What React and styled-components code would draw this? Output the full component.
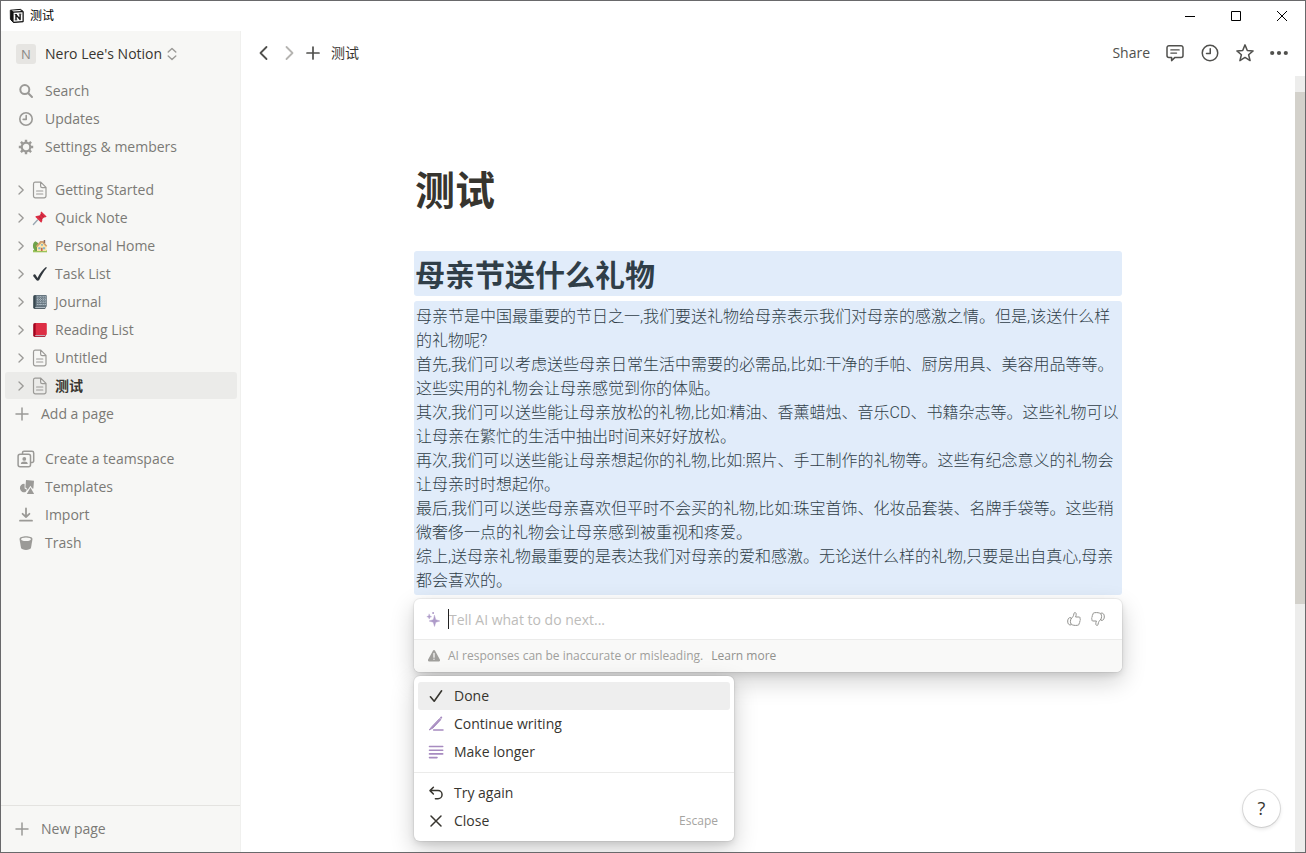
import React from 'react';
import styled, { createGlobalStyle } from 'styled-components';

const GlobalStyle = createGlobalStyle`
    * {
        box-sizing: border-box;
    }
    html, body, #root {
        height: 100%;
        margin: 0;
    }
    body {
        font-family: 'Open Sans', 'Noto Sans CJK SC', sans-serif;
        font-size: 14px;
        line-height: 18px;
        color: #37352f;
        background: #fff;
    }
    button, input {
        font-family: inherit;
        font-size: inherit;
        line-height: inherit;
        color: inherit;
        margin: 0;
        padding: 0;
        border: 0;
        background: none;
        outline: none;
    }
    a {
        color: inherit;
        text-decoration: none;
    }
    svg {
        display: block;
        flex-shrink: 0;
    }
`;

const Window = styled.div`
    display: flex;
    flex-direction: column;
    height: 100vh;
    border: 1px solid #69696b;
    overflow: hidden;
`;

const TitleBar = styled.header`
    display: flex;
    flex-shrink: 0;
    align-items: center;
    height: 30px;
    padding-left: 8px;
    font-size: 12px;
    color: #000;
`;

const WindowTitle = styled.span`
    flex: 1;
    padding-left: 5px;
`;

const WindowButton = styled.button`
    display: flex;
    align-items: center;
    justify-content: center;
    width: 46px;
    height: 28px;
`;

const Body = styled.div`
    display: flex;
    flex: 1;
    min-height: 0;
`;

const Sidebar = styled.nav`
    display: flex;
    flex-direction: column;
    flex-shrink: 0;
    width: 240px;
    background: #f7f7f5;
    border-right: 1px solid #f0f0ee;
    font-weight: 500;
    color: #7b7a76;
`;

const Workspace = styled.button`
    display: flex;
    align-items: center;
    height: 46px;
    padding-left: 15px;
    font-weight: 500;
    color: #37352f;
`;

const Avatar = styled.span`
    width: 20px;
    margin-right: 9px;
    border-radius: 3px;
    background: #e6e5e2;
    font-size: 13px;
    line-height: 20px;
    text-align: center;
    color: #8b8a86;
`;

const WorkspaceName = styled.span`
    margin-right: 5px;
`;

const Section = styled.div`
    display: flex;
    flex-direction: column;
    margin-bottom: ${props => props.$gap || 0}px;
`;

const Item = styled.a`
    display: flex;
    align-items: center;
    height: ${props => props.$active ? 27 : 28}px;
    margin: 0 3px ${props => props.$active ? 1 : 0}px 4px;
    padding-left: 10px;
    border-radius: 3px;
    background: ${props => props.$active ? '#ebebe9' : 'transparent'};
    color: ${props => props.$active ? '#37352f' : 'inherit'};
    font-weight: ${props => props.$active ? 600 : 500};
`;

const IconSlot = styled.span`
    display: flex;
    align-items: center;
    justify-content: center;
    width: ${props => props.$width || 22}px;
    margin-right: ${props => props.$gap}px;
    color: #9b9a97;
`;

const NewPage = styled.button`
    display: flex;
    align-items: center;
    height: 47px;
    margin-top: auto;
    padding-left: 14px;
    border-top: 1px solid #e4e3e0;
    font-weight: 500;
`;

const Main = styled.main`
    position: relative;
    display: flex;
    flex: 1;
    flex-direction: column;
    min-width: 0;
`;

const TopBar = styled.div`
    display: flex;
    flex-shrink: 0;
    align-items: center;
    justify-content: space-between;
    height: 45px;
    padding: 0 17px 2px 15px;
`;

const BarGroup = styled.div`
    display: flex;
    align-items: center;
    gap: ${props => props.$gap}px;
    color: #50504d;
`;

const BarButton = styled.button`
    display: flex;
    align-items: center;
    justify-content: center;
    height: 24px;
    color: ${props => props.$faded ? '#b5b4b1' : '#50504d'};
`;

const Crumb = styled.a`
    margin-left: 2px;
    color: #37352f;
`;

const Scroller = styled.div`
    display: flex;
    flex: 1;
    min-height: 0;
`;

const Page = styled.article`
    flex: 1;
    min-width: 0;
    padding: 84px 96px 0;
    overflow: hidden;
`;

const Column = styled.div`
    max-width: 708px;
    margin: 0 auto;
`;

const Title = styled.h1`
    margin: 0 0 31px;
    padding: 0 1px;
    font-size: 40px;
    font-weight: 700;
    line-height: 60px;
`;

const Heading = styled.h2`
    margin: 0 0 5px;
    padding: 4px 1px 2px;
    border-radius: 3px;
    background: #e1ecfa;
    font-size: 30px;
    font-weight: 700;
    line-height: 39px;
    color: #303e48;
`;

const TextBlock = styled.div`
    margin-bottom: 4px;
    padding: 4px 0 2px 2px;
    border-radius: 3px;
    background: #e1ecfa;
    font-family: Roboto, 'Noto Sans CJK SC', sans-serif;
    font-size: 16px;
    font-weight: 300;
    line-height: 24px;
    color: #303e48;
    text-spacing-trim: space-all;
    p {
        margin: 0;
    }
`;

const floating = `
    border-radius: 6px;
    background: #fff;
    box-shadow: 0 0 0 1px rgba(15, 15, 15, 0.05), 0 3px 6px rgba(15, 15, 15, 0.1), 0 9px 24px rgba(15, 15, 15, 0.2);
`;

const AiPanel = styled.form`
    ${floating}
    margin-bottom: 4px;
    overflow: hidden;
`;

const Prompt = styled.label`
    display: flex;
    align-items: center;
    height: 40px;
    padding: 0 16px 0 12px;
`;

const PromptInput = styled.input`
    flex: 1;
    min-width: 0;
    height: 20px;
    margin-left: 8px;
    border-left: 1px solid #222;
    &::placeholder {
        color: #bdbcba;
        opacity: 1;
    }
`;

const VoteButton = styled.button`
    margin-left: 8px;
    color: #91918e;
`;

const Notice = styled.div`
    display: flex;
    align-items: center;
    height: 33px;
    padding: 0 13px;
    border-top: 1px solid #ebebea;
    background: #f9f9f8;
    font-size: 12px;
    color: #a09f9c;
    span {
        margin: 0 8px 0 7px;
    }
    a {
        font-weight: 500;
        color: #91918e;
    }
`;

const Menu = styled.div`
    ${floating}
    position: relative;
    width: 320px;
`;

const MenuGroup = styled.div`
    padding: 6px 4px;
    & + & {
        border-top: 1px solid #ebebea;
    }
`;

const MenuItem = styled.button`
    display: flex;
    align-items: center;
    width: 100%;
    height: 28px;
    padding: 0 12px 0 10px;
    border-radius: 3px;
    background: ${props => props.$active ? '#eeeeee' : 'transparent'};
    span {
        flex: 1;
        margin-left: 10px;
        text-align: left;
    }
    kbd {
        font-family: inherit;
        font-size: 12px;
        color: #a5a4a1;
    }
`;

const ScrollTrack = styled.div`
    flex-shrink: 0;
    width: 10px;
    padding-top: 16px;
    background: #ededec;
`;

const ScrollThumb = styled.div`
    height: 67.4%;
    background: #d3d1cb;
`;

const HelpButton = styled.button`
    position: absolute;
    right: 25px;
    bottom: 25px;
    width: 37px;
    height: 37px;
    border-radius: 50%;
    background: #fff;
    box-shadow: 0 0 0 1px rgba(15, 15, 15, 0.12), 0 2px 4px rgba(15, 15, 15, 0.12);
    font-size: 18px;
    line-height: 37px;
`;

const Icon = ({ size = 16, box = 16, stroke = 1.4, children }) => (
    <svg width={size} height={size} viewBox={`0 0 ${box} ${box}`} fill="none" stroke="currentColor" strokeWidth={stroke} strokeLinecap="round" strokeLinejoin="round" aria-hidden="true">
        {children}
    </svg>
);

const LogoIcon = () => (
    <Icon stroke={1}>
        <path d="M1.7 2.2 L11.5 1.4 L14.2 3.4 V13.8 L4.4 14.5 L1.7 11.6 Z" fill="#111" stroke="#111" />
        <path d="M4.6 4.8 L13.5 4.2 V13.1 L4.6 13.7 Z" fill="#fff" stroke="none" />
        <path d="M2.8 2.6 L11 2 L12.4 3 L4.5 3.6 Z" fill="#fff" stroke="none" />
        <path d="M7 11.8 V6.6 L11.1 11.5 V6.2" stroke="#111" strokeWidth="1.4" strokeLinecap="butt" />
        <path d="M6.1 6.5 H7.6 M6.1 11.9 H7.9 M10.2 6.1 H12" stroke="#111" strokeWidth="0.8" />
    </Icon>
);

const SearchIcon = () => (
    <Icon stroke={2}>
        <circle cx="6.8" cy="6.6" r="4.5" />
        <path d="M10.3 10.2 L14 14" />
    </Icon>
);

const ClockIcon = ({ size, stroke = 1.6 }) => (
    <Icon size={size} stroke={stroke}>
        <circle cx="8" cy="8" r="6.2" />
        <path d="M8.2 4.6 V8.4 H5.2" />
    </Icon>
);

const GearIcon = () => (
    <Icon stroke={2.2}>
        <circle cx="8" cy="8" r="4.3" />
        <path strokeLinecap="butt" strokeWidth="2.4" d="M8 4 V0.8 M8 12 V15.2 M4 8 H0.8 M12 8 H15.2 M5.2 5.2 L2.9 2.9 M10.8 10.8 L13.1 13.1 M5.2 10.8 L2.9 13.1 M10.8 5.2 L13.1 2.9" />
    </Icon>
);

const UpDownIcon = () => (
    <svg width="10" height="14" viewBox="0 0 10 14" fill="none" stroke="#9b9a97" strokeWidth="1.4" strokeLinecap="round" strokeLinejoin="round">
        <path d="M1.2 5 L5 1.4 L8.8 5 M1.2 9 L5 12.6 L8.8 9" />
    </svg>
);

const ChevronIcon = () => (
    <Icon size={10} box={10} stroke={1.3}>
        <path d="M3 1 L7.2 5 L3 9" />
    </Icon>
);

const PlusIcon = ({ stroke = 1.5 }) => (
    <Icon size={14} box={14} stroke={stroke}>
        <path d="M7 1 V13 M1 7 H13" />
    </Icon>
);

const PageIcon = () => (
    <Icon size={18} box={18} stroke={1.2}>
        <path d="M4 1.2 H9.8 L15 6.4 V15 A1.8 1.8 0 0 1 13.2 16.8 H4.3 A1.8 1.8 0 0 1 2.5 15 V2.9 A1.7 1.7 0 0 1 4 1.2 Z M9.6 1.4 V5 A1.6 1.6 0 0 0 11.2 6.6 H14.8 M5.6 10 H11.8 M5.6 13 H11.8" />
    </Icon>
);

const PinIcon = () => (
    <Icon>
        <path d="M5.5 10 L1.4 14.4" stroke="#9aa8b2" strokeWidth="1.4" />
        <path d="M9.4 1.4 L14.6 6.5 C13.8 7.5 12.8 7.4 12.2 7.2 L10.2 9.3 C10.5 10.8 10 12 9.2 12.8 L3.2 6.8 C4 6 5.4 5.5 6.8 5.9 L8.8 3.9 C8.5 3 8.5 2.1 9.4 1.4 Z" fill="#dd2e44" stroke="none" />
        <path d="M8.9 4.2 L11.8 7.2 M6.6 6.2 L9.9 9.4" stroke="#a61d32" strokeWidth="0.8" />
    </Icon>
);

const HouseIcon = () => (
    <Icon stroke={0}>
        <path d="M1 12 H15 V14.3 H1 Z" fill="#9ac35a" />
        <path d="M3.5 3.2 C1.3 4 0.4 7 1.2 10 L3 13 H6 V5 Z" fill="#6fa24a" />
        <path d="M5 8 L10 3.6 L14.5 8 V13 H5 Z" fill="#ffe5a8" />
        <path d="M3.8 8.2 L8.2 3 H11.4 L15.3 8 L14 8.8 L10 4.6 L5 9.2 Z" fill="#d0a070" />
        <path d="M11.7 2 H13.2 V5 H11.7 Z" fill="#8b6b61" />
        <path d="M6.3 9.3 H8.5 V11.2 H6.3 Z M10.9 9.3 H13.1 V11.2 H10.9 Z" fill="#7fb5d3" />
        <path d="M8.9 9.8 H10.6 V13 H8.9 Z" fill="#bf6952" />
        <path d="M9.2 6 H10.8 V7.7 H9.2 Z" fill="#7bb1c9" />
    </Icon>
);

const TaskIcon = () => (
    <Icon>
        <path d="M1.2 9.2 C2.1 7.9 3.2 8 4 9.4 L5.5 12 C7.7 7.6 10.3 4.1 13.6 1.3 C14.6 0.8 15.2 1.5 14.5 2.3 C11.7 5.6 9.3 9.5 7.2 14 C6.5 15 4.9 15 4.3 14 L1.3 10.3 Z" fill="#31373d" stroke="none" />
    </Icon>
);

// one cover shape for both book icons
const BookIcon = ({ cover, spine, dotted }) => (
    <Icon stroke={0}>
        <path d="M3 1 H14 V13 L13 15 H3 Q1.2 15 1.2 13.3 V2.7 Q1.2 1 3 1 Z" fill={spine} />
        <path d="M3.2 13.2 H13.3 V14.2 H3.2 Z" fill="#ccd6dd" />
        <path d="M3.6 1 H13.8 Q14.8 1 14.8 2 V12 Q14.8 13 13.8 13 H3.6 Z" fill={cover} />
        {dotted && (
            <path d="M6 2 V12 M8.5 2 V12 M11 2 V12 M13 2 V12 M4.8 3 H14 M4.8 5.5 H14 M4.8 8 H14 M4.8 10.5 H14" stroke="#b4c1ca" strokeWidth="0.8" strokeDasharray="1.2 0.8" strokeLinecap="butt" />
        )}
    </Icon>
);

const TeamIcon = () => (
    <Icon size={18} box={18} stroke={1.5}>
        <path d="M5.5 4 V2.8 A1.5 1.5 0 0 1 7 1.3 H15 A1.7 1.7 0 0 1 16.7 3 V10.8 A1.6 1.6 0 0 1 15 12.5 H14" />
        <rect x="1.1" y="4.3" width="12.4" height="12.4" rx="2" />
        <circle cx="7.3" cy="8.9" r="1.9" fill="currentColor" stroke="none" />
        <path d="M3.8 14 C4 12.4 5.3 11.6 7.3 11.6 C9.3 11.6 10.6 12.4 10.8 14 Z" fill="currentColor" stroke="none" />
    </Icon>
);

const TemplatesIcon = () => (
    <Icon stroke={0}>
        <path d="M8 1 L16 1.7 L15.4 9.6 L14.2 9.5 L12.5 6.8 L9.6 11 L8.4 9 L7.4 8.6 Z" fill="currentColor" />
        <path d="M6.6 4.9 A4.2 4.2 0 1 0 7.6 13 L9 10.8 L6.6 9.4 Z" fill="currentColor" />
        <path d="M12.5 8.6 L16.2 15 H8.8 Z" fill="currentColor" />
    </Icon>
);

const ImportIcon = () => (
    <Icon stroke={1.8}>
        <path d="M8 1.5 V10 M4.6 6.8 L8 10 L11.4 6.8 M2 13.7 H14" />
    </Icon>
);

const TrashIcon = () => (
    <Icon stroke={0}>
        <path d="M1.5 4 C1.5 0.3 14.5 0.3 14.5 4 L13 12.8 C12.5 15.6 3.5 15.6 3 12.8 Z" fill="currentColor" />
        <ellipse cx="8" cy="4.3" rx="4.9" ry="1.8" fill="#f7f7f5" />
    </Icon>
);

const CommentIcon = () => (
    <Icon size={20} box={20} stroke={1.5}>
        <path d="M4 2.7 H16 A2 2 0 0 1 18 4.7 V12.4 A2 2 0 0 1 16 14.4 H10 L6.6 17.6 V14.4 H4 A2 2 0 0 1 2 12.4 V4.7 A2 2 0 0 1 4 2.7 Z" />
        <path d="M5.8 6.9 H14.2 M5.8 10.1 H11.6" strokeWidth="1.2" />
    </Icon>
);

const StarIcon = () => (
    <Icon size={20} box={20} stroke={1.5}>
        <path d="M10 1.9 L12.3 7.5 L18.1 7.9 L13.6 11.7 L15.1 17.6 L10 14.4 L4.9 17.6 L6.4 11.7 L1.9 7.9 L7.7 7.5 Z" />
    </Icon>
);

const MoreIcon = () => (
    <svg width="18" height="6" viewBox="0 0 18 6" fill="currentColor">
        <circle cx="2.2" cy="3" r="2.1" />
        <circle cx="9" cy="3" r="2.1" />
        <circle cx="15.8" cy="3" r="2.1" />
    </svg>
);

const SparkleIcon = () => (
    <Icon stroke={0}>
        <path d="M9.5 4.6 L10.7 8.7 L14.8 10 L10.7 11.2 L9.5 15.4 L8.3 11.2 L4.2 10 L8.3 8.7 Z" fill="#ae9bc9" stroke="#ae9bc9" strokeWidth="0.5" />
        <path d="M4.2 3.2 L4.9 5 L6.6 5.7 L4.9 6.3 L4.2 8.1 L3.5 6.3 L1.8 5.7 L3.5 5 Z" fill="#ae9bc9" stroke="#ae9bc9" strokeWidth="0.4" />
        <circle cx="8.1" cy="2" r="1" fill="#ae9bc9" />
    </Icon>
);

const ThumbIcon = ({ down }) => (
    <Icon stroke={1}>
        <g transform={down ? 'rotate(180 8 8)' : undefined}>
            <path d="M5.2 7.6 C6.7 6.5 7.5 4.9 7.9 3 C8.1 1.7 8.7 1.3 9.4 1.6 C10.4 2 10.4 4 9.6 6 H13 C14.2 6 14.5 7.2 13.9 7.9 C14.6 8.5 14.4 9.6 13.7 10 C14.1 10.8 13.8 11.7 13.2 12 C13.4 13.5 12.6 14.2 11.3 14.3 C8.9 14.6 6.6 14.3 5.2 13.2 C4.1 11.5 4.1 9.4 5.2 7.6 Z" />
            <path d="M4.6 6.7 H3.6 C1.3 7.2 1 12.6 3.2 13.7 L4.8 13.9" />
        </g>
    </Icon>
);

const WarningIcon = () => (
    <Icon size={14} box={14} stroke={0}>
        <path d="M7 1 Q7.7 1 8.1 1.8 L13 10.7 Q13.4 12.2 12 12.4 H2 Q0.6 12.2 1 10.7 L5.9 1.8 Q6.3 1 7 1 Z" fill="#a09f9c" />
        <path d="M7 4.5 V8.2 M7 10.2 V10.3" stroke="#f9f9f8" strokeWidth="1.3" />
    </Icon>
);

const DoneIcon = () => (
    <Icon stroke={1.6}><path d="M2.4 8.8 L6.2 13.2 L13.6 2.8" /></Icon>
);

const WriteIcon = () => (
    <Icon stroke={1.5}>
        <path d="M5.6 13.9 H15" stroke="#a78bc0" />
        <path d="M11.8 2.8 L12.8 3.7 L5 12 L1.2 14 L3.6 10.9 Z" fill="#a78bc0" stroke="#a78bc0" strokeWidth="0.9" />
        <path d="M12.9 1.9 L13.3 1.5" stroke="#a78bc0" strokeWidth="1.8" />
    </Icon>
);

const LongerIcon = () => (
    <Icon stroke={1.6}><path d="M1.5 2.5 H14.7 M1.5 6.2 H14.7 M1.5 9.9 H14.7 M1.5 13.6 H9" stroke="#a78bc0" /></Icon>
);

const UndoIcon = () => (
    <Icon stroke={1.5}><path d="M5.4 2.2 L2 5.6 L5.4 9 M2.2 5.6 H10 A4 4 0 0 1 10 13.7 H7.4" /></Icon>
);

const CloseIcon = () => (
    <Icon stroke={1.5}><path d="M3 3 L13 13 M13 3 L3 13" /></Icon>
);

const topLinks = [
    { name: 'Search', icon: <SearchIcon /> },
    { name: 'Updates', icon: <ClockIcon size={16} /> },
    { name: 'Settings & members', icon: <GearIcon /> }
];

const pages = [
    { name: 'Getting Started', icon: <PageIcon /> },
    { name: 'Quick Note', icon: <PinIcon /> },
    { name: 'Personal Home', icon: <HouseIcon /> },
    { name: 'Task List', icon: <TaskIcon /> },
    { name: 'Journal', icon: <BookIcon cover="#66757f" spine="#37474f" dotted /> },
    { name: 'Reading List', icon: <BookIcon cover="#dd2e44" spine="#a0041e" /> },
    { name: 'Untitled', icon: <PageIcon /> },
    { name: '测试', icon: <PageIcon />, active: true }
];

const bottomLinks = [
    { name: 'Create a teamspace', icon: <TeamIcon /> },
    { name: 'Templates', icon: <TemplatesIcon /> },
    { name: 'Import', icon: <ImportIcon /> },
    { name: 'Trash', icon: <TrashIcon /> }
];

const paragraphs = [
    '母亲节是中国最重要的节日之一,我们要送礼物给母亲表示我们对母亲的感激之情。但是,该送什么样的礼物呢?',
    '首先,我们可以考虑送些母亲日常生活中需要的必需品,比如:干净的手帕、厨房用具、美容用品等等。这些实用的礼物会让母亲感觉到你的体贴。',
    '其次,我们可以送些能让母亲放松的礼物,比如:精油、香薰蜡烛、音乐CD、书籍杂志等。这些礼物可以让母亲在繁忙的生活中抽出时间来好好放松。',
    '再次,我们可以送些能让母亲想起你的礼物,比如:照片、手工制作的礼物等。这些有纪念意义的礼物会让母亲时时想起你。',
    '最后,我们可以送些母亲喜欢但平时不会买的礼物,比如:珠宝首饰、化妆品套装、名牌手袋等。这些稍微奢侈一点的礼物会让母亲感到被重视和疼爱。',
    '综上,送母亲礼物最重要的是表达我们对母亲的爱和感激。无论送什么样的礼物,只要是出自真心,母亲都会喜欢的。'
];

const LinkList = ({ links, gap }) => (
    <Section $gap={gap}>
        {links.map(link => (
            <Item href="#" key={link.name}>
                <IconSlot $gap={8}>{link.icon}</IconSlot>
                {link.name}
            </Item>
        ))}
    </Section>
);

const App = () => (
    <Window>
        <GlobalStyle />
        <TitleBar>
            <LogoIcon />
            <WindowTitle>测试</WindowTitle>
            <WindowButton aria-label="Minimize">
                <svg width="10" height="10" viewBox="0 0 10 10" stroke="#000"><path d="M0 5.5 H10" /></svg>
            </WindowButton>
            <WindowButton aria-label="Maximize">
                <svg width="10" height="10" viewBox="0 0 10 10" fill="none" stroke="#000"><path d="M0.5 0.5 H9.5 V9.5 H0.5 Z" /></svg>
            </WindowButton>
            <WindowButton aria-label="Close window">
                <svg width="10" height="10" viewBox="0 0 10 10" stroke="#000"><path d="M0 0 L10 10 M10 0 L0 10" /></svg>
            </WindowButton>
        </TitleBar>
        <Body>
            <Sidebar>
                <Workspace>
                    <Avatar>N</Avatar>
                    <WorkspaceName>Nero Lee's Notion</WorkspaceName>
                    <UpDownIcon />
                </Workspace>
                <LinkList links={topLinks} gap={15} />
                <Section $gap={17}>
                    {pages.map(page => (
                        <Item href="#" key={page.name} $active={page.active}>
                            <IconSlot $width={12} $gap={2}><ChevronIcon /></IconSlot>
                            <IconSlot $gap={4}>{page.icon}</IconSlot>
                            {page.name}
                        </Item>
                    ))}
                    <Item href="#">
                        <IconSlot $width={14} $gap={12}><PlusIcon /></IconSlot>
                        Add a page
                    </Item>
                </Section>
                <LinkList links={bottomLinks} />
                <NewPage>
                    <IconSlot $width={14} $gap={12}><PlusIcon /></IconSlot>
                    New page
                </NewPage>
            </Sidebar>
            <Main>
                <TopBar>
                    <BarGroup $gap={9}>
                        <BarButton aria-label="Back">
                            <Icon stroke={1.8}><path d="M10.5 2 L4.5 8 L10.5 14" /></Icon>
                        </BarButton>
                        <BarButton aria-label="Forward" $faded>
                            <Icon stroke={1.8}><path d="M5.5 2 L11.5 8 L5.5 14" /></Icon>
                        </BarButton>
                        <BarButton aria-label="New tab"><PlusIcon stroke={1.7} /></BarButton>
                        <Crumb href="#">测试</Crumb>
                    </BarGroup>
                    <BarGroup $gap={15}>
                        <BarButton>Share</BarButton>
                        <BarButton aria-label="Comments"><CommentIcon /></BarButton>
                        <BarButton aria-label="History"><ClockIcon size={20} stroke={1.2} /></BarButton>
                        <BarButton aria-label="Favorite"><StarIcon /></BarButton>
                        <BarButton aria-label="More"><MoreIcon /></BarButton>
                    </BarGroup>
                </TopBar>
                <Scroller>
                    <Page>
                        <Column>
                            <Title>测试</Title>
                            <Heading>母亲节送什么礼物</Heading>
                            <TextBlock>
                                {paragraphs.map((text, i) => <p key={i}>{text}</p>)}
                            </TextBlock>
                            <AiPanel onSubmit={(e) => e.preventDefault()}>
                                <Prompt>
                                    <IconSlot $width={14} $gap={0}><SparkleIcon /></IconSlot>
                                    <PromptInput aria-label="Tell AI what to do next" placeholder="Tell AI what to do next..." />
                                    <VoteButton type="button" aria-label="Good response"><ThumbIcon /></VoteButton>
                                    <VoteButton type="button" aria-label="Bad response"><ThumbIcon down /></VoteButton>
                                </Prompt>
                                <Notice>
                                    <WarningIcon />
                                    <span>AI responses can be inaccurate or misleading.</span>
                                    <a href="#">Learn more</a>
                                </Notice>
                            </AiPanel>
                            <Menu>
                                <MenuGroup>
                                    <MenuItem $active><DoneIcon /><span>Done</span></MenuItem>
                                    <MenuItem><WriteIcon /><span>Continue writing</span></MenuItem>
                                    <MenuItem><LongerIcon /><span>Make longer</span></MenuItem>
                                </MenuGroup>
                                <MenuGroup>
                                    <MenuItem><UndoIcon /><span>Try again</span></MenuItem>
                                    <MenuItem><CloseIcon /><span>Close</span><kbd>Escape</kbd></MenuItem>
                                </MenuGroup>
                            </Menu>
                        </Column>
                    </Page>
                    <ScrollTrack>
                        <ScrollThumb />
                    </ScrollTrack>
                </Scroller>
                <HelpButton aria-label="Help">?</HelpButton>
            </Main>
        </Body>
    </Window>
);

export default App;
